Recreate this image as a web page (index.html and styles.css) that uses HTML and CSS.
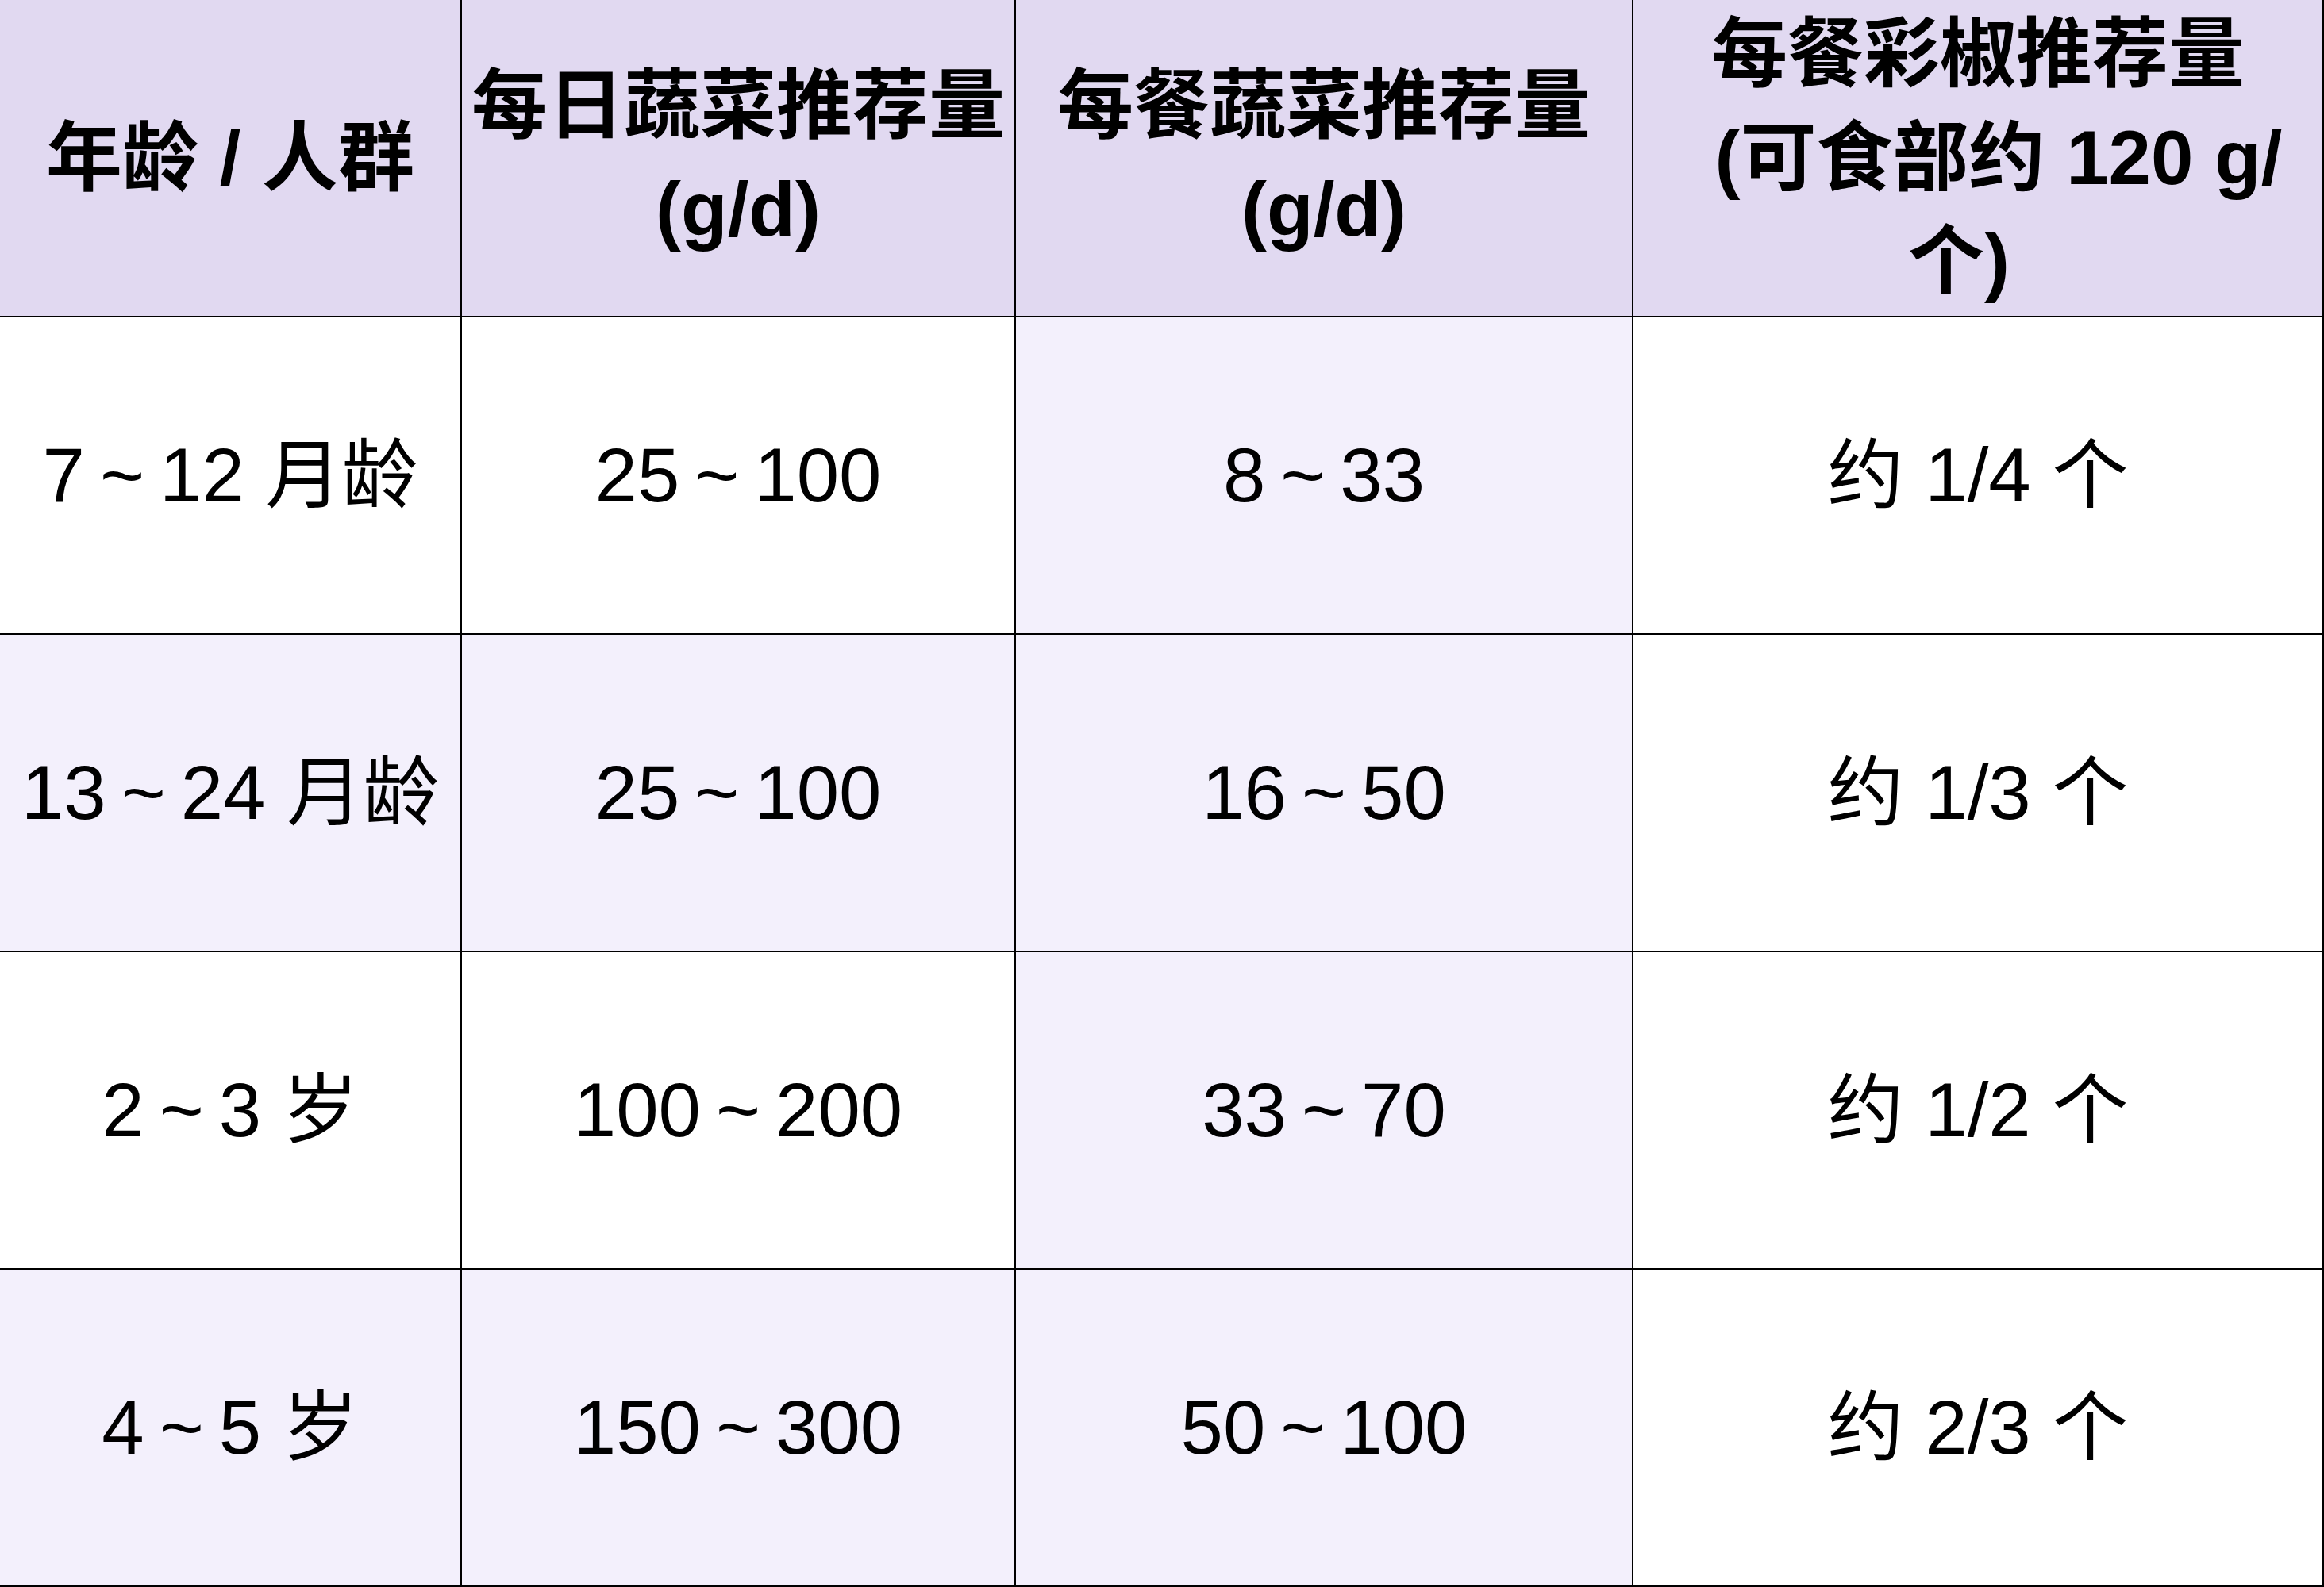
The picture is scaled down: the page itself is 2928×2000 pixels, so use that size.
FILE: index.html
```html
<!DOCTYPE html>
<html lang="zh-CN">
<head>
<meta charset="utf-8">
<title>蔬菜推荐量</title>
<link rel="stylesheet" href="styles.css">
</head>
<body>
<div class="table">
  <div class="cell head">年龄 / 人群</div>
  <div class="cell head">每日蔬菜推荐量<br>(g/d)</div>
  <div class="cell head">每餐蔬菜推荐量<br>(g/d)</div>
  <div class="cell head"><div class="txt">每餐彩椒推荐量<br><span class="line-b">(可食部约 120 g/</span><br><span class="line-c">个)</span></div></div>

  <div class="cell"><div class="txt">7<span class="sep">~</span>12 月龄</div></div>
  <div class="cell"><div class="txt">25<span class="sep">~</span>100</div></div>
  <div class="cell tint"><div class="txt">8<span class="sep">~</span>33</div></div>
  <div class="cell">约 1/4 个</div>

  <div class="cell tint"><div class="txt">13<span class="sep">~</span>24 月龄</div></div>
  <div class="cell tint"><div class="txt">25<span class="sep">~</span>100</div></div>
  <div class="cell tint"><div class="txt">16<span class="sep">~</span>50</div></div>
  <div class="cell">约 1/3 个</div>

  <div class="cell"><div class="txt">2<span class="sep">~</span>3 岁</div></div>
  <div class="cell"><div class="txt">100<span class="sep">~</span>200</div></div>
  <div class="cell tint"><div class="txt">33<span class="sep">~</span>70</div></div>
  <div class="cell">约 1/2 个</div>

  <div class="cell tint"><div class="txt">4<span class="sep">~</span>5 岁</div></div>
  <div class="cell tint"><div class="txt">150<span class="sep">~</span>300</div></div>
  <div class="cell tint"><div class="txt">50<span class="sep">~</span>100</div></div>
  <div class="cell">约 2/3 个</div>
</div>
</body>
</html>
```

FILE: styles.css
```css
html, body {
  margin: 0;
  padding: 0;
  background: #ffffff;
}

.table {
  display: grid;
  grid-template-columns: 582px 698px 778px 870px;
  grid-auto-rows: 400px;
  width: 2928px;
  font-family: "Liberation Sans", "Noto Sans CJK SC", sans-serif;
  color: #000000;
}

.cell {
  box-sizing: border-box;
  border-right: 2px solid #000000;
  border-bottom: 2px solid #000000;
  display: flex;
  align-items: center;
  justify-content: center;
  text-align: center;
  padding: 0 6px;
  font-size: 96px;
  line-height: 1.36;
  background: #ffffff;
  white-space: nowrap;
}

.txt {
  text-align: center;
}

.sep {
  margin: 0 19px;
}

.head {
  background: #e1d9f1;
  font-weight: bold;
}

.line-b {
  display: inline-block;
  padding-left: 52px;
}

.line-c {
  display: inline-block;
  padding-right: 48px;
}

.tint {
  background: #f3f0fc;
}
```
